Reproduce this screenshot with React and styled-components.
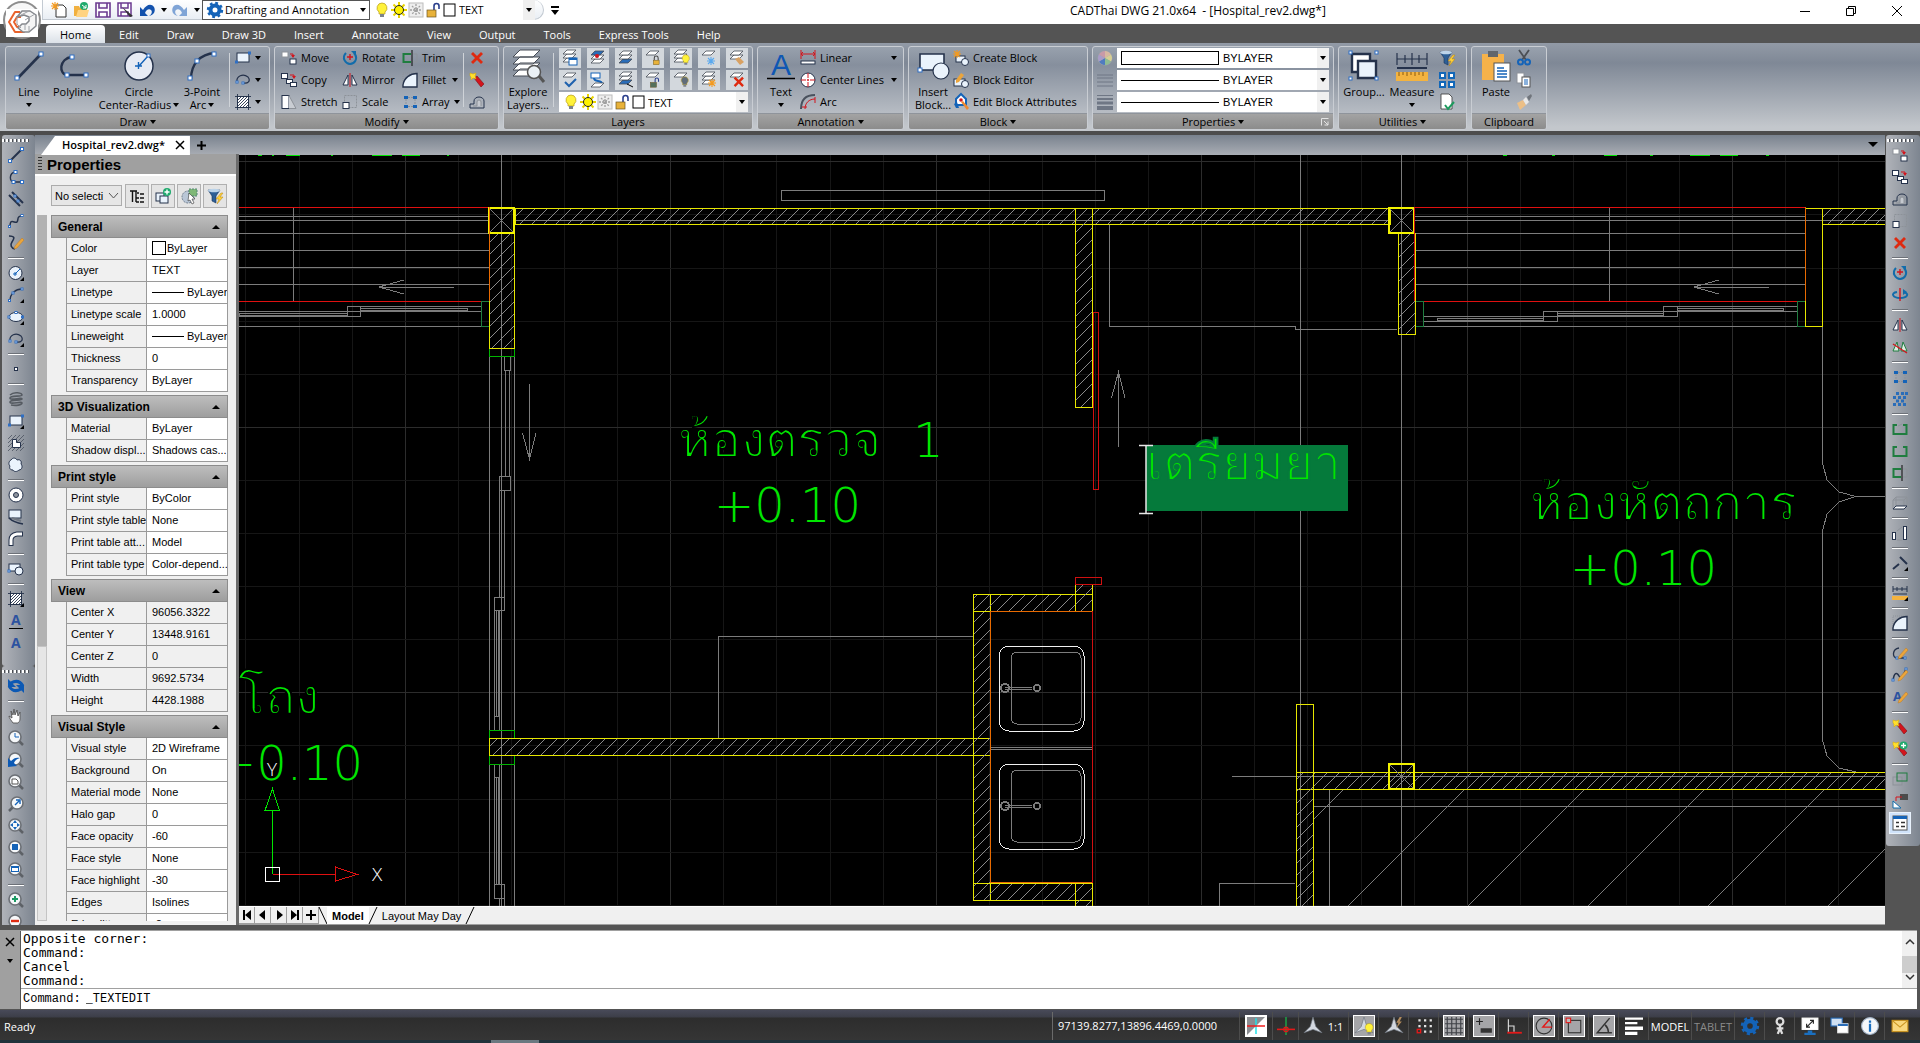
import React from 'react';
import styled, { createGlobalStyle, css } from 'styled-components'

const GlobalStyle = createGlobalStyle`
    * { box-sizing: border-box; }
    body {
        margin: 0;
        background: #545454;
        font-family: "Open Sans", "Noto Sans", sans-serif;
        font-size: 11px;
        color: #000;
    }
    button, select, input {
        font: inherit;
        color: inherit;
        margin: 0;
        padding: 0;
        border: 0;
        background: none;
    }
    select { appearance: none; }
    svg { display: block; flex: none; overflow: visible; }
`

const NAVY = '#25324b'
const BLUE = '#1463b8'
const PALE = '#eaf3fc'
const GRAY = '#8d9299'
const GREEN = '#1f7d3f'

/* ---------- icons, drawn on a 16 unit square unless a box is given ---------- */

const H = ({ x, y, s = 3 }) => <rect x={x} y={y} width={s} height={s} fill="#fff" stroke="#2f6fc4" />
const Box = ({ x, y, w, h, c = NAVY, f = '#fff' }) => <rect x={x} y={y} width={w} height={h} fill={f} stroke={c} />
const P = ({ d, c = NAVY, w = 1, f = 'none' }) => <path d={d} stroke={c} strokeWidth={w} fill={f} />
const Corner = () => <path d="M16 12v4h-4z" fill="#000" />
const Sheet = ({ y, f = '#fff' }) => <path d={`M5 ${y}h9l-4 4H1z`} fill={f} stroke="#454b55" strokeWidth="0.8" />
const Pen = () => <path d="M14 3l2 2-7 8-3 1 1-3z" fill="#eba53c" stroke="#b97518" strokeWidth="0.4" />
const Lens = ({ children }) => (
    <g>
        <path d="M11 11l4 4" stroke="#5d6166" strokeWidth="2.5" />
        <circle cx="7" cy="7" r="6" fill="#f6f8fa" stroke="#6c7076" strokeWidth="1.6" />
        {children}
    </g>
)
const Lock = ({ open, c = '#e8b23a' }) => (
    <g>
        <path d={open ? 'M9 8V4a2.500 2.500 0 0 1 5 0v3' : 'M5 8V4.500a3 3 0 0 1 6 0V8'} fill="none" stroke={open ? '#2b3f8c' : '#444'} strokeWidth="1.6" />
        <rect x={open ? 2 : 3.5} y="8" width="9" height="7" fill={c} stroke="#6b5523" strokeWidth="0.7" />
    </g>
)
const Bulb = ({ c = '#fff23a' }) => (
    <g>
        <path d="M8 1a5 5 0 0 0-3 9v2h6v-2a5 5 0 0 0-3-9z" fill={c} stroke="#b59a1c" strokeWidth="0.7" />
        <path d="M6 12h4v3H6z" fill="#7d838b" />
    </g>
)
const Spark = ({ x = 4, y = 4, c = '#f39a1f' }) => (
    <path d={`M${x - 4} ${y}h8M${x} ${y - 4}v8M${x - 3} ${y - 3}l6 6M${x + 3} ${y - 3}l-6 6`} stroke={c} strokeWidth="1.1" />
)
const Gear = ({ c = BLUE }) => (
    <g fill="none" stroke={c}>
        <circle cx="8" cy="8" r="4.500" strokeWidth="4" />
        <circle cx="8" cy="8" r="7" strokeWidth="2.400" strokeDasharray="2.750 2.750" />
    </g>
)
const Cross = () => <path d="M2 4l2-2 4 4 4-4 2 2-4 4 4 4-2 2-4-4-4 4-2-2 4-4z" fill="#de2a10" />
const Stick = () => (
    <g>
        <path d="M5 6l3-2 7 8-3 3z" fill="#d3141c" stroke="#7e1015" strokeWidth="0.6" />
        <path d="M1 1l3 1 3-1-1 3 1 3-3-1-2 2V5L1 4z" fill="#ffe02e" stroke="#d7a900" strokeWidth="0.5" />
    </g>
)
const Funnel = () => (
    <g>
        <path d="M1 2h12L9 8v7l-4-2V8z" fill="#2d5f96" stroke="#1a365c" strokeWidth="0.6" />
        <ellipse cx="7" cy="2.500" rx="6" ry="1.800" fill="#bcd4ea" />
        <path d="M14 5l-5 6h3l-2 5 6-7h-3l3-4z" fill="#ffd23a" stroke="#b98412" strokeWidth="0.5" />
    </g>
)
const Compass = () => <path d="M8 0l2.500 8.500L16 14l-8-3-8 3 5.500-5.500z" fill="#d3d8e0" stroke="#6b737e" strokeWidth="0.6" />

const icons = {
    line: <><P d="M2 14L14 2" w={2} /><H x={0.5} y={12.5} /><H x={12.5} y={0.5} /></>,
    polyline: <><P d="M7 3C1 4 1 13 6 13h8" w={1.4} /><H x={6} y={1.5} /><H x={4} y={11.5} /><H x={12.5} y={11.5} /></>,
    mline: <><P d="M1 4l11 11M4 1l11 11" w={2} /><H x={6} y={4} s={2} /><H x={9} y={9} s={2} /></>,
    spline: <><P d="M2 14C2 4 7 11 9 9S8 3 14 3" w={1.5} /><H x={0.5} y={12.5} s={2} /><H x={13} y={1.5} s={2} /></>,
    sketch: <><P d="M1 1c7 0 5 3 3 6s-1 6 3 7" w={1.6} /><Pen /></>,
    circle: <><circle cx="7.5" cy="8" r="6.500" fill={PALE} stroke={NAVY} /><P d="M7 9l5-5M5 9h4M7 7v4" c={BLUE} /><Corner /></>,
    arc: <><P d="M2 14C2 6 8 2 14 2" w={1.3} /><H x={0.5} y={12.5} s={2} /><H x={4} y={5} s={2} /><H x={13} y={1} s={2} /><Corner /></>,
    ellipse: <><ellipse cx="8" cy="8" rx="7" ry="4.500" fill={PALE} stroke={NAVY} /><H x={0} y={7} s={2} /><H x={7} y={2.5} s={2} /><H x={13.5} y={7} s={2} /><Corner /></>,
    ellarc: <><P d="M2 10C1 4 8 1 13 5c3 4 0 7-5 6" w={1.2} /><H x={1} y={9} s={2} /><H x={7} y={10} s={2} /></>,
    ellarcc: <><P d="M2 10C1 4 8 1 13 5c3 4 0 7-5 6" w={1.2} /><H x={1} y={9} s={2} /><H x={7} y={10} s={2} /><Corner /></>,
    point: <Box x={6.5} y={6.5} w={3} h={3} />,
    helix: <g fill="none" stroke="#565b62"><path d="M2 4c4-4 12-2 12 0S2 4 2 7s12-1 12 1-12 0-12 3 12-1 12 1-6 3-11 2" strokeWidth="1.600" /></g>,
    rect: <><Box x={2} y={3} w={12} h={9} f={PALE} /><H x={0.5} y={11} s={2} /><H x={13.5} y={2} s={2} /></>,
    rectc: <><Box x={2} y={3} w={12} h={9} f={PALE} /><H x={0.5} y={11} s={2} /><H x={13.5} y={2} s={2} /><Corner /></>,
    region: <><P d="M0 4l4-4M0 8l8-8M0 12L12 0M0 16L16 0M4 16L16 4M8 16l8-8M12 16l4-4" c="#4a525e" w={0.8} /><P d="M4.500 12.500v-8h4v3h4v5z" f="#fff" /></>,
    cloud: <P d="M3 3c2-3 5-2 6 0 3-1 5 1 4 4 2 2 1 6-2 6-2 2-5 2-6 0-3 0-4-2-3-4-2-2-1-5 1-6z" f={PALE} />,
    donut: <><circle cx="8" cy="8" r="7" fill="#fff" stroke={NAVY} /><circle cx="8" cy="8" r="2.500" fill="#8f959e" stroke={NAVY} /></>,
    wipe: <><Box x={1} y={1} w={12} h={8} f={PALE} /><P d="M1 9c4 4 8 5 14 6" w={1.6} /><P d="M4 9l9 3" c="#6f7782" w={2} /></>,
    thick: <><P d="M3 15V9q0-5 6-6h6" c={NAVY} w={5} /><P d="M3 14V9q0-5 6-6h5" c="#fff" w={3} /></>,
    block: <><Box x={1} y={3} w={11} h={7} f={PALE} /><circle cx="11" cy="10" r="4" fill={PALE} stroke={NAVY} /><H x={0} y={9} s={2} /></>,
    hatch: <><Box x={2.5} y={2.5} w={11} h={11} /><P d="M3 6l3-3M3 9l6-6M3 12l9-9M4 14L14 4M7 14l7-7M10 14l4-4M0 2.500h16M2.500 0v16M0 13.500h16M13.500 0v16" w={0.9} /></>,
    hatchc: <><Box x={2.5} y={2.5} w={11} h={11} /><P d="M3 6l3-3M3 9l6-6M3 12l9-9M4 14L14 4M7 14l7-7M10 14l4-4M0 2.500h16M2.500 0v16M0 13.500h16M13.500 0v16" w={0.9} /><Corner /></>,
    textu: <><text x="3" y="12" fontSize="14" fontWeight="bold" fontFamily="Open Sans" fill="#2c52a0">A</text><P d="M1 15.500h14" c="#000" /></>,
    text: <text x="3" y="13" fontSize="14" fontWeight="bold" fontFamily="Open Sans" fill="#2c52a0">A</text>,
    sync: <><P d="M15 8C12 3 8 2 3 5M1 8c3 5 7 6 12 3" c="#0c59b4" w={3} /><path d="M0 1v8h8zM16 15V7H8z" fill="#0c59b4" /></>,
    hand: <P d="M5 15C3 12 1 10 1 8l3 2-1-7 2 4 1-6 1 6 2-5 1 6 2-4 0 7c0 2-1 3-2 4z" f="#fff" c="#555" w={0.9} />,
    zoomrt: <Lens><P d="M7 3v4h4" c={BLUE} /></Lens>,
    zoomprev: <Lens><path d="M0 15V6l3 3c3-3 5-4 9-3-4 1-5 3-6 5l3 3z" fill="#0c59b4" /></Lens>,
    zoompage: <Lens><path d="M4 5h4l2 2v3H4z" fill="#fff" stroke="#555" /></Lens>,
    zoomdyn: <g transform="matrix(-1 0 0 1 16 0)"><Lens><P d="M9 9L5 5M4 8V4h4" c={BLUE} w={1.4} /></Lens></g>,
    zoomctr: <Lens><path d="M7 2l2 3H5zM7 12l2-3H5zM2 7l3-2v4zM12 7L9 5v4z" fill={BLUE} /></Lens>,
    zoomobj: <Lens><rect x="4" y="4" width="6" height="6" fill={BLUE} /></Lens>,
    zoomwin: <Lens><Box x={3.5} y={4.5} w={7} h={5} c={BLUE} /><P d="M3 5h8" c={BLUE} w={2} /></Lens>,
    zoomin: <Lens><P d="M4 7h6M7 4v6" c="#1c9a63" w={2} /></Lens>,
    zoomout: <Lens><P d="M3 7h8" c="#de2a10" w={2.4} /></Lens>,
    move: <><Box x={1} y={2} w={6} h={5} c={GRAY} /><Box x={9} y={9} w={6} h={5} /><P d="M9 4h3v3" c="#d3141c" /><path d="M10 5h4l-2 3z" fill="#d3141c" /></>,
    copy: <><Box x={0.5} y={1.5} w={6} h={5} /><Box x={5.5} y={7.5} w={6} h={4} /><Box x={9.5} y={10.5} w={6} h={4} /><P d="M9 3h4v2" c="#d3141c" /><path d="M11 4h4l-2 3z" fill="#d3141c" /></>,
    offset: <><P d="M1 14v-4h4V7a5 4 0 0 1 10 0v7H1" /><P d="M4 12h4V8a2 2 0 0 1 4 0v4" c={GRAY} f="#c5c9cf" /></>,
    scale: <><rect x="2.5" y="1.500" width="12" height="12" fill="none" stroke={GRAY} strokeDasharray="2 1" /><Box x={1} y={8.5} w={6} h={6} /></>,
    erase: <Cross />,
    rotate: <><P d="M4 3C-1 8 4 14 8 14s9-5 4-11" c="#116cab" w={2} /><path d="M9 1h5v5z" fill="#116cab" /><P d="M5 7h6M8 4v6" c="#d3141c" w={1.4} /></>,
    rotate3d: <><P d="M5 5C-2 6 1 11 8 11s10-4 4-6" c="#116cab" w={2} /><path d="M11 2l4 3-4 3z" fill="#116cab" /><P d="M8 1v13" c="#d3141c" w={1.4} /></>,
    mirror: <><P d="M6 3v10H1z" f="#fff" /><P d="M10 3v10h5z" f="#fff" /><P d="M8 1v14" c="#d3141c" /></>,
    mirror3d: <><P d="M5 3l2 9H1z" c={GREEN} f="#dfeee4" /><P d="M11 3l4 9H9z" c={GREEN} f="#dfeee4" /><P d="M1 5l14 9" c="#d3141c" w={1.3} /></>,
    array: <g><path d="M2 2h4v3H2zM11 2h4v3h-4zM2 11h4v3H2zM11 11h4v3h-4z" fill={BLUE} /><path d="M6 3.500h5M6 12.500h5M4 5v6M13 5v6" stroke={GRAY} strokeDasharray="2 1" /></g>,
    array3d: <path d="M1 5h3v3H1zM6 5h3v3H6zM11 5h3v3h-3zM1 12h3v3H1zM6 12h3v3H6zM11 12h3v3h-3zM4 1h3v3H4zM9 1h3v3H9zM13 1h3v3h-3zM4 8.500h3v3H4zM9 8.500h3v3H9z" fill="#2a6db9" />,
    brk: <><P d="M5 4H1.500v9h13V4H11" c={GREEN} w={2} /><P d="M6 5l4-2" c={GRAY} /></>,
    brk2: <P d="M5 4H1.500v9h13V4H11" c={GREEN} w={2} />,
    trim: <><P d="M9 4H1.500v8H9" c={GREEN} w={2} /><P d="M11 4h4v8h-4" c={GRAY} /><P d="M10 0v16" c="#222" w={1.2} /></>,
    cube: <><P d="M1 14V5l3-3h11v9l-3 3zM1 5h11v9M12 5l3-3M4 2v9l-3 3" c={GRAY} /><P d="M1 14l3-3h11l-3 3z" f="#fff" /></>,
    align: <><Box x={0.5} y={7.5} w={3} h={7} /><Box x={11.5} y={1.5} w={3} h={13} /><P d="M5 6l5-4M5 15h5" c={GRAY} /></>,
    chamf: <><P d="M1 14l6-5M8 2l7 7" c={NAVY} w={2} /><Corner /></>,
    measure: <><P d="M1 4h14M1 1v6M5 2v4M10 2v4M15 1v6M1 9h14" /><path d="M0 11h16v4H0z" fill="#f4b33f" /><Corner /></>,
    fillet: <><rect x="1" y="1" width="13" height="13" fill="none" stroke={GRAY} strokeDasharray="1 1" /><P d="M1 15V13C2 6 8 1.500 15 1.500V15z" w={1.4} f={PALE} /></>,
    pedit: <><P d="M7 3C0 4 0 13 5 13h8" w={1.3} /><H x={4} y={12} s={2} /><H x={12} y={12} s={2} /><Pen /></>,
    splinedit: <><P d="M1 14C2 5 5 5 7 9s5-2 7-7" w={1.5} /><H x={0} y={12} s={2} /><H x={13} y={1} s={2} /><Pen /></>,
    textedit: <><text x="1" y="12" fontSize="13" fontWeight="bold" fontFamily="Open Sans" fill="#2c52a0">A</text><Pen /></>,
    explode: <Stick />,
    explodeadd: <><Stick /><circle cx="11.5" cy="4.500" r="4" fill="#1faa6d" /><P d="M9 4.500h5M11.500 2v5" c="#fff" w={1.3} /></>,
    order: <><Box x={1} y={6} w={9} h={8} c={GRAY} f="none" /><Box x={5} y={2} w={10} h={8} c={GREEN} f="none" /></>,
    clip: <><path d="M8 1h8v6H8z" fill="#4b4b4b" /><path d="M1 8l8 7H1z" fill="#fff" stroke="#116cab" /><P d="M4 8V4h6" c="#d3141c" /></>,
    props: <><Box x={1} y={1} w={14} h={14} c="#555" /><path d="M1 1h14v3H1z" fill={BLUE} /><P d="M4 7.500h3M9 7.500h4M4 11.500h3M9 11.500h4" c="#333" w={1.5} /></>,
    stretch: <><Box x={1} y={1.5} w={7} h={13} f="#fff" /><P d="M8 1.500l7 13H8" c={GRAY} f="#c9cdd3" /></>,
    gearico: <Gear />,
    newdoc: <><path d="M5 3h7l3 3v9H5z" fill="#fff" stroke="#333" /><Spark /></>,
    open: <><path d="M1 4h5l1 2h7v8H1z" fill="#f1b03f" /><path d="M3 15l2-7h11l-2 7z" fill="#ffd382" /><circle cx="11" cy="4" r="4" fill="#1faa6d" /><P d="M9 3l4 3M13 3v3h-3" c="#fff" /></>,
    save: <path d="M1 1h14v14H1zM4 1v5h8V1M4 15v-5h8v5" fill="#fff" stroke="#6b3a90" strokeWidth="1.600" />,
    saveas: <><path d="M1 1h13v13H1zM4 1v5h7V1M4 14v-4h7v4" fill="#fff" stroke="#6b3a90" strokeWidth="1.500" /><path d="M5 5l11 9-3 1z" fill="#333" /></>,
    undo: <path d="M1 5v9h8L6 11c1-3 4-5 6-3s0 5-2 6c5-1 7-5 5-9C12 1 7 3 4 8z" fill="#1352ad" />,
    redo: <path d="M15 5v9H7l3-3c-1-3-4-5-6-3s0 5 2 6C1 13-1 9 1 5c3-4 8-2 11 3z" fill="#7fa4d6" />,
    bulb: <Bulb />,
    sun: <g><path d="M8 0v16M0 8h16M2.500 2.500l11 11M13.500 2.500l-11 11" stroke="#e8d400" strokeWidth="2" /><circle cx="8" cy="8" r="4.500" fill="#fff200" stroke="#222" /></g>,
    vpsun: <g stroke="#a0a0a0"><rect x="1" y="1" width="14" height="14" fill="#eee" stroke="#bcbcbc" /><path d="M8 2v12M2 8h12M4 4l8 8M12 4l-8 8" strokeWidth="1.300" strokeDasharray="2 1" /></g>,
    unlock: <Lock open />,
    swatch: <Box x={2} y={2} w={11} h={12} c="#000" />,
    lstate: <><Sheet y={8} /><Sheet y={4} /><Sheet y={0} /><Box x={7} y={8} w={8} h={7} c={BLUE} /><P d="M7 9h8" c={BLUE} w={2} /></>,
    lcur: <><Sheet y={9} /><Sheet y={5} /><Sheet y={1} f="#2a6db9" /><circle cx="7" cy="6" r="2" fill="#d3141c" /></>,
    lprev: <><Sheet y={9} f="#2a6db9" /><Sheet y={5} /><Sheet y={1} /></>,
    llock: <><Sheet y={1} /><g transform="translate(6 5) scale(.65)"><Lock /></g></>,
    lbulb: <><Sheet y={8} /><Sheet y={4} /><Sheet y={0} /><g transform="translate(7 4) scale(.72)"><Bulb /></g></>,
    lfreeze: <><Sheet y={1} /><Spark x={10} y={11} c="#5aa9ef" /></>,
    lmatch: <><Sheet y={5} /><Sheet y={1} /><path d="M6 9l4-2 5 5-4 3z" fill="#d8a163" /></>,
    lcheck: <><Sheet y={1} /><P d="M3 10l4 4 7-7" c="#1f62ae" w={2} /></>,
    lcopy: <><Box x={1} y={1} w={9} h={5} c={BLUE} /><P d="M4 6c0 5 8 1 8 6" c={BLUE} w={2} /><Sheet y={11} /></>,
    lwalk: <><Sheet y={8} f="#2a6db9" /><Sheet y={4} /><Sheet y={0} /><P d="M9 12l6 3" c="#000" /></>,
    lunlock: <><Sheet y={1} /><g transform="translate(4 5) scale(.68)"><Lock open c="#55705c" /></g></>,
    loff: <><Sheet y={1} /><g transform="translate(6 4) scale(.72)"><Bulb c="#5f6c7a" /></g></>,
    lnew: <><Sheet y={8} /><Sheet y={4} /><Sheet y={0} /><Spark x={11} y={11} /></>,
    ldel: <><Sheet y={1} /><g transform="translate(3 3) scale(.85)"><Cross /></g></>,
    linear: <><P d="M1 0v9M15 0v9M1 4h14M3 2L1 4l2 2M13 2l2 2-2 2" c="#d3141c" /><Box x={1} y={11} w={14} h={3} /></>,
    center: <><circle cx="8" cy="8" r="7" fill="#fff" stroke={NAVY} /><P d="M1 8h5M7 8h2M10 8h5M8 1v5M8 7v2M8 10v5" c="#d3141c" /></>,
    dimarc: <><P d="M1 15C1 6 6 1 15 1" c="#4a525e" w={2} /><P d="M5 15C5 9 9 5 15 5M15 3v6M2 13h5" c="#d3141c" /></>,
    mkblock: <><Box x={3} y={6} w={9} h={6} f={PALE} /><circle cx="12" cy="12" r="3.500" fill={PALE} stroke={NAVY} /><Spark /></>,
    edblock: <><Box x={1} y={7} w={11} h={7} f={PALE} /><circle cx="12" cy="12" r="3.500" fill={PALE} stroke={NAVY} /><path d="M8 1l3 2-5 7-3 1v-3z" fill="#eba53c" /></>,
    edattr: <><path d="M8 0l5 5v6H3V5z" fill="#fff" stroke={BLUE} strokeWidth="2" /><circle cx="8" cy="6" r="1.800" fill="#d3141c" /><path d="M1 10l3-2 2 6H3z" fill={BLUE} /><path d="M8 8l2-1 6 7-2 2z" fill="#f08a32" /></>,
    wheel: <g><circle cx="8" cy="8" r="7.500" fill="#9aa1ab" /><path d="M8 8V1a7 7 0 0 1 6 3.500z" fill="#d8b8a0" /><path d="M8 8l6-3.500a7 7 0 0 1 0 7z" fill="#d6cf94" /><path d="M8 8l6 3.500A7 7 0 0 1 8 15z" fill="#8fbc92" /><path d="M8 8v7a7 7 0 0 1-6-3.500z" fill="#4f7cc0" /><path d="M8 8l-6 3.500a7 7 0 0 1 0-7z" fill="#a99cc8" /><path d="M8 8L2 4.500A7 7 0 0 1 8 1z" fill="#c99aa8" /></g>,
    ltype: <P d="M0 3h16M0 6h16M0 10h16M0 14h16" c="#6f7785" w={1} />,
    lweight: <><P d="M0 1.500h16" c="#6f7785" /><P d="M0 5h16" c="#6f7785" w={2} /><P d="M0 9h16" c="#6f7785" w={3} /><P d="M0 14h16" c="#6f7785" w={4} /></>,
    filter: <Funnel />,
    quad: <path d="M1 1h5v5H1zM10 1h5v5h-5zM1 10h5v5H1zM10 10h5v5h-5z" fill="#fff" stroke="#1267b8" strokeWidth="2" />,
    audit: <><path d="M2 0h8l3 3v12H2z" fill="#fff" stroke="#333" strokeWidth="0.8" /><P d="M6 11l3 4 6-7" c="#1b9a5c" w={2} /></>,
    cut: <><P d="M3 0l7 10M13 0L6 10" c="#4b4f55" w={1.8} /><circle cx="4.5" cy="12" r="2.500" fill="none" stroke="#1463b8" strokeWidth="2" /><circle cx="11.5" cy="12" r="2.500" fill="none" stroke="#1463b8" strokeWidth="2" /></>,
    copyclip: <><Box x={1} y={1} w={7} h={10} c={GRAY} /><Box x={6} y={5} w={8} h={10} c="#555" /><P d="M8 8h4M8 10h4M8 12h4" c={BLUE} /></>,
    brush: <><path d="M1 9l6-3 3 5-6 5z" fill="#ecbf86" /><path d="M7 6l3-3 3 5-3 3z" fill="#e8e8e8" /><path d="M11 3l4-3 1 2-3 5z" fill="#70757c" /></>,
    tree: <P d="M1 3h7M3.500 3v11M7 3v11M8 5h2M11 6h4M7 10h3M11 10h4M7 14h3M11 14h4" c="#111" w={1.4} />,
    addsel: <><Box x={1} y={5} w={8} h={8} f={PALE} /><Box x={5} y={8} w={8} h={7} f={PALE} /><circle cx="12" cy="4" r="4" fill="#1faa6d" /><P d="M9.500 4h5M12 1.500v5" c="#fff" w={1.4} /></>,
    qsel: <><circle cx="7" cy="9" r="6" fill="#b9c6d6" stroke="#6c7b8c" strokeDasharray="2 1" /><path d="M8 1h8v7H8z" fill="#7fb877" stroke="#587" strokeDasharray="2 1" /><path d="M8 5l6 6h-3l2 4-2 1-2-4-2 1z" fill="#fff" stroke="#333" strokeWidth="0.6" /></>,
    /* status bar */
    snaptrack: <><path d="M0 0h16L0 16z" fill="#8b8d92" /><P d="M8 1v14" c="#1fe3ea" w={1.3} /><P d="M0 8h16" c="#f01818" w={1.3} /></>,
    cross: <><P d="M8 0v16" c="#19b04a" w={1.2} /><P d="M0 11h16" c="#e31919" w={1.4} /><circle cx="8" cy="11" r="2" fill="none" stroke="#e31919" /></>,
    compass: <Compass />,
    compassb: <><Compass /><g transform="translate(7 5) scale(.7)"><Bulb /></g></>,
    compassl: <><Compass /><path d="M13 0l-3 5h2l-2 5 5-6h-2l2-4z" fill="#b08a5c" /></>,
    dots: <><path d="M3 2h2v2H3zM8 2h2v2H8zM13 2h2v2h-2zM3 7h2v2H3zM8 7h2v2H8zM13 7h2v2h-2zM8 12h2v2H8zM13 12h2v2h-2z" fill="#e4e4e4" /><rect x="2" y="11" width="3" height="3" fill="none" stroke="#e31919" strokeWidth="1.200" /></>,
    grid: <P d="M2 0v16M6 0v16M10 0v16M14 0v16M0 2h16M0 6h16M0 10h16M0 14h16" c="#3e4046" />,
    dyn: <><P d="M1 4h6M4 1v6" c="#222" /><path d="M5 10h10v4H5z" fill="#333" /></>,
    ortho: <><P d="M3 2v11M3 8h5v5" c="#ddd" /><P d="M2 14h13" c="#e31919" w={1.6} /></>,
    polar: <><circle cx="8" cy="8" r="7" fill="none" stroke="#333" /><P d="M13 2L7 9h8" c="#e31919" w={1.3} /></>,
    osnap: <><Box x={3} y={3} w={11} h={11} c="#333" f="none" /><Box x={1} y={1} w={4} h={4} c="#e31919" f="#bbb" /></>,
    otrack: <P d="M13 1L2 14h13M9 7q3 3 3 7" c="#333" w={1.3} />,
    lwt: <><P d="M0 1.500h16M0 5.500h11" c="#fff" w={2} /><P d="M0 10h16M0 14.500h11" c="#fff" w={3} /></>,
    badge: <g fill="none" stroke="#dedede" strokeWidth="2"><circle cx="8" cy="4" r="3" /><path d="M8 7v3M5 10h6M6 15l2-5 2 5" /></g>,
    screen: <><Box x={1} y={1} w={14} h={10} c="#fff" /><P d="M5 9l6-6M8 3h3v3M5 6v3h3" c="#222" /><path d="M6 12h4v2h3v2H3v-2h3z" fill="#1a6fc0" /></>,
    windows: <><Box x={0} y={1} w={10} h={7} c="#2a6db9" f="#cfe0f3" /><Box x={6} y={6} w={9} h={8} c="#eee" /><P d="M6 7h9" c="#2a6db9" w={2} /></>,
    info: <><circle cx="8" cy="8" r="7.500" fill="#f4f7fb" stroke="#9fb0c4" /><path d="M7 6h2v7H7zM7 3h2v2H7z" fill="#1a6fc0" /></>,
    mail: <><Box x={1} y={3} w={14} h={10} c="#c8921f" f="#f9d77c" /><P d="M1 3l7 6 7-6" c="#c8921f" /></>,
}

/* large ribbon icons, on a 32 unit square */
const bigIcons = {
    Line: <><P d="M4 29L28 4" w={2.6} /><H x={2} y={26} s={4} /><H x={26} y={2} s={4} /></>,
    Polyline: <><P d="M15 7C2 8 1 25 11 25h19" w={2.4} /><H x={13} y={5} s={4} /><H x={8} y={23} s={4} /><H x={27} y={23} s={4} /></>,
    Circle: <><circle cx="16" cy="16" r="14" fill="#e6eaf3" stroke={NAVY} strokeWidth="1.500" /><P d="M16 16l9-10M12 16h7M15.500 12v7" c={BLUE} w={1.4} /><H x={24} y={4} s={3} /></>,
    Arc: <><P d="M5 29C5 14 14 4 29 3" w={2.4} /><H x={2} y={26} s={4} /><H x={9} y={9} s={4} /><H x={26} y={2} s={4} /></>,
    Layers: (
        <g fill="#fff" stroke="#454b55">
            <path d="M8 19h20l-7 7H1zM8 13h20l-7 7H1zM8 7h20l-7 7H1zM8 0h20l-7 7H1z" />
            <path d="M27 26l5 6" stroke="#555" strokeWidth="3" /><circle cx="22" cy="22" r="6.500" fill="#eaf0f5" stroke="#555" strokeWidth="1.500" />
        </g>
    ),
    Text: <><text x="6" y="25" fontSize="30" fontFamily="Liberation Sans" fill="#0f57b3">A</text><P d="M2 28.500h28" c="#000" w={1.4} /></>,
    Insert: <><P d="M3 4h24v16H3z" w={1.6} f={PALE} /><circle cx="24" cy="21" r="8" fill={PALE} stroke={NAVY} strokeWidth="1.200" /><H x={1} y={18} s={4} /></>,
    Group: <><P d="M4 4h18v18H4z" w={2.4} f="#fff" /><P d="M10 11h18v17H10z" w={2.4} f={PALE} /><H x={1} y={1} /><H x={27} y={1} /><H x={1} y={27} /><H x={27} y={27} /></>,
    Measure: <><P d="M1 9h30M1 3v12M9 5v8M16 3v12M23 5v8M31 3v12" w={1.2} /><P d="M1 18h30" w={2} /><path d="M0 22h32v9H0z" fill="#f4b33f" /><P d="M3 22v4M7 22v3M11 22v4M15 22v3M19 22v4M23 22v3M27 22v4" c="#8b5a10" /></>,
    Paste: <><path d="M2 4h22v26H2z" fill="#f6b24a" /><path d="M8 1h10v6H8z" fill="#61666c" /><Box x={14} y={13} w={16} h={18} c="#555" /><P d="M17 18h7M17 21h10M17 24h10M17 27h10" c={BLUE} w={1.5} /></>,
}

const Icon = ({ name, size = 16 }) => <svg width={size} height={size} viewBox="0 0 16 16" aria-hidden="true">{icons[name]}</svg>
const BigIcon = ({ name }) => <svg width="32" height="32" viewBox="0 0 32 32" aria-hidden="true">{bigIcons[name]}</svg>

const Caret = styled.span`
    display: inline-block;
    border: 3px solid transparent;
    border-top: 4px solid #000;
    border-bottom: 0;
    flex: none;
`

/* ---------- title bar ---------- */

const Page = styled.div`
    display: flex;
    flex-direction: column;
    height: 100vh;
    min-width: 1600px;
    overflow: hidden;
`
const TitleBar = styled.header`
    position: relative;
    display: flex;
    height: 24px;
    flex: none;
    background: #fff;
    padding-left: 42px;
`
const Logo = styled.div`
    position: absolute;
    left: 3px;
    top: 2px;
    z-index: 2;
`
const QuickBar = styled.div`
    display: flex;
    align-items: center;
    height: 20px;
    padding: 0 8px 0 5px;
    border: 1px solid #c3cad2;
    border-top: 0;
    border-radius: 0 10px 10px 0;
    background: linear-gradient(#fff, #e9eef4);
`
const QuickButton = styled.button`
    display: flex;
    justify-content: center;
    align-items: center;
    width: ${p => p.$narrow ? '11px' : '22px'};
    height: 20px;
`
const Combo = styled.div`
    display: flex;
    align-items: center;
    gap: ${p => p.$gap || 2}px;
    width: ${p => p.$width};
    height: 20px;
    padding-left: 4px;
    background: #fff;
    border: ${p => p.$framed ? '1px solid #555' : '0'};
    select { flex: 1; min-width: 0; height: 18px; font-family: ${p => p.$arial ? '"Liberation Sans", sans-serif' : 'inherit'}; }
`
const ComboArrow = styled.span`
    display: flex;
    align-items: center;
    justify-content: center;
    align-self: stretch;
    width: 12px;
    background: ${p => p.$shaded ? '#f0f0f0' : 'none'};
`
const AppTitle = styled.h1`
    flex: 1;
    margin: 0;
    font-size: 12px;
    font-weight: normal;
    line-height: 22px;
    padding-left: 504px;
`
const WindowButton = styled.button`
    display: flex;
    align-items: center;
    justify-content: center;
    width: 46px;
    height: 22px;
`

const LayerCombo = ({ width, label }) => (
    <Combo $width={width} $gap={1}>
        <Icon name="bulb" /><Icon name="sun" /><Icon name="vpsun" /><Icon name="unlock" /><Icon name="swatch" />
        <select aria-label={label}><option>TEXT</option></select>
        <ComboArrow $shaded><Caret /></ComboArrow>
    </Combo>
)

const Title = () => (
    <TitleBar>
        <Logo>
            <svg width="38" height="38" viewBox="0 0 38 38" role="img" aria-label="CADThai">
                <circle cx="19" cy="18" r="18" fill="#f7f7f7" stroke="#8e8e8e" strokeWidth="2" />
                <path d="M3 7h32v28H3z" fill="#fff" />
                <g fill="none" strokeLinejoin="round">
                    <path d="M17 10H12L6 20l6 10h9l3-5M18 15h-4l-3 5 3 5h3" stroke="#e8622c" strokeWidth="2" />
                    <path d="M14 15l5-6h8l6 4v11l-7 6h-6l-5-4 4-4h4l3-3v-4l-5-2z" fill="#f5f5f5" stroke="#85888d" strokeWidth="1.500" />
                    <path d="M18 13l8-4M22 18l10-6M22 22v6M26 24v5M14 15v7l4 4" stroke="#a0a3a8" />
                </g>
            </svg>
        </Logo>
        <QuickBar>
            <QuickButton aria-label="New"><Icon name="newdoc" /></QuickButton>
            <QuickButton aria-label="Open"><Icon name="open" /></QuickButton>
            <QuickButton aria-label="Save"><Icon name="save" /></QuickButton>
            <QuickButton aria-label="Save as"><Icon name="saveas" /></QuickButton>
            <QuickButton aria-label="Undo"><Icon name="undo" /></QuickButton>
            <QuickButton $narrow aria-label="Undo list"><Caret /></QuickButton>
            <QuickButton aria-label="Redo"><Icon name="redo" /></QuickButton>
            <QuickButton $narrow aria-label="Redo list"><Caret /></QuickButton>
            <Combo $width="168px" $framed>
                <Icon name="gearico" />
                <select aria-label="Workspace"><option>Drafting and Annotation</option></select>
                <ComboArrow><Caret /></ComboArrow>
            </Combo>
            <LayerCombo width="165px" label="Layer" />
        </QuickBar>
        <QuickButton aria-label="Customize"><svg width="8" height="9"><path d="M0 0h8v2H0zM0 4h8L4 9z" /></svg></QuickButton>
        <AppTitle>CADThai DWG 21.0x64 &nbsp;- [Hospital_rev2.dwg*]</AppTitle>
        <WindowButton aria-label="Minimize"><svg width="10" height="10"><path d="M0 5.500h10" stroke="#000" /></svg></WindowButton>
        <WindowButton aria-label="Restore"><svg width="10" height="10"><path d="M.5 2.500h7v7h-7zM2.500 2.500v-2h7v7h-2" fill="none" stroke="#000" /></svg></WindowButton>
        <WindowButton aria-label="Close"><svg width="10" height="10"><path d="M0 0l10 10M10 0L0 10" stroke="#000" /></svg></WindowButton>
    </TitleBar>
)

/* ---------- ribbon ---------- */

const TabRow = styled.nav`
    display: flex;
    height: 19px;
    flex: none;
    padding-left: 46px;
    background: #545454;
`
const RibbonTab = styled.button`
    height: 18px;
    margin-top: 1px;
    padding: 1px 14px 0;
    color: #fff;
    line-height: 18px;
    ${p => p.$active && css`
        color: #000;
        background: linear-gradient(#fff, #dbe1e8);
        border-radius: 4px 4px 0 0;
    `}
`
const RibbonBar = styled.div`
    display: flex;
    gap: 4px;
    flex: none;
    height: 92px;
    padding: 3px 5px 4px;
    background: linear-gradient(#929aa6, #7f8896 20px, #c3c7cc 84px);
    border-bottom: 4px solid #4d4d4d;
`
const Panel = styled.section`
    display: flex;
    flex-direction: column;
    flex: 0 0 ${p => p.$width}px;
    height: 84px;
    border: 1px solid #c9cdd3;
    border-radius: 3px;
    background: linear-gradient(#98a1ad, #868f9d 18px, #b9bec5 68px);
    overflow: hidden;
`
const PanelBody = styled.div`
    display: flex;
    flex: 1;
    padding: 0 ${p => p.$pad || 4}px;
`
const PanelTitle = styled.h2`
    display: flex;
    align-items: center;
    justify-content: center;
    gap: 3px;
    margin: 0;
    height: 16px;
    font-size: 11px;
    font-weight: normal;
    background: linear-gradient(#a3a3a3, #8c8c8c);
    border-top: 1px solid #8f949b;
`
const Launcher = styled.button`
    position: absolute;
    right: 4px;
    bottom: 3px;
`
const Big = styled.button`
    display: flex;
    flex-direction: column;
    align-items: center;
    width: ${p => p.$width}px;
    padding-top: 3px;
    line-height: 13px;
    white-space: nowrap;
    flex: none;
    svg { margin-bottom: 3px; }
`
const BigLine = styled.span`
    display: flex;
    align-items: center;
    gap: 2px;
    height: 13px;
`
const Column = styled.div`
    display: flex;
    flex-direction: column;
    flex: ${p => p.$grow ? '1' : 'none'};
    width: ${p => p.$width ? p.$width + 'px' : 'auto'};
`
const Small = styled.button`
    display: flex;
    align-items: center;
    gap: 4px;
    height: 22px;
    line-height: 20px;
    padding-bottom: 1px;
    white-space: nowrap;
    text-align: left;
    span:last-child { margin-left: ${p => p.$push ? 'auto' : '0'}; }
`
const Rule = styled.i`
    width: 1px;
    flex: none;
    margin: 6px 5px;
    background: #cfd3d8;
`
const LayerGrid = styled.div`
    display: grid;
    grid-template-columns: repeat(7, 22px);
    justify-content: space-between;
    row-gap: 2px;
    padding: 1px 0 2px;
`
const LayerButton = styled.button`
    display: flex;
    align-items: center;
    justify-content: center;
    height: 20px;
    background: #d3d8dd;
`
const PropRow = styled.label`
    display: flex;
    align-items: center;
    gap: 4px;
    height: 22px;
    & > div { flex: 1; }
`

const Launch = ({ icon, lines, width, arrow }) => (
    <Big $width={width}>
        <BigIcon name={icon} />
        {lines.map((t, i) => <BigLine key={t}>{t}{arrow && i === lines.length - 1 && <Caret />}</BigLine>)}
    </Big>
)

const Tool = ({ icon, text, arrow, push }) => (
    <Small $push={push} aria-label={text ? undefined : icon}>
        <Icon name={icon} />{text}{arrow && <Caret />}
    </Small>
)

const ribbonTabs = ['Home', 'Edit', 'Draw', 'Draw 3D', 'Insert', 'Annotate', 'View', 'Output', 'Tools', 'Express Tools', 'Help']
const layerTools = ['lstate', 'lcur', 'lprev', 'llock', 'lbulb', 'lfreeze', 'lmatch', 'lcheck', 'lcopy', 'lwalk', 'lunlock', 'loff', 'lnew', 'ldel']

const Ribbon = () => (
    <>
        <TabRow>
            {ribbonTabs.map(t => <RibbonTab key={t} $active={t === 'Home'}>{t}</RibbonTab>)}
        </TabRow>
        <RibbonBar>
            <Panel $width={265}>
                <PanelBody>
                    <Launch icon="Line" lines={['Line', ' ']} arrow width={38} />
                    <Launch icon="Polyline" lines={['Polyline']} width={50} />
                    <Launch icon="Circle" lines={['Circle', 'Center-Radius']} arrow width={82} />
                    <Launch icon="Arc" lines={['3-Point', 'Arc']} arrow width={44} />
                    <Rule />
                    <Column>
                        <Tool icon="rect" arrow /><Tool icon="ellarc" arrow /><Tool icon="hatch" arrow />
                    </Column>
                </PanelBody>
                <PanelTitle>Draw <Caret /></PanelTitle>
            </Panel>
            <Panel $width={225}>
                <PanelBody $pad={6}>
                    <Column $width={61}>
                        <Tool icon="move" text="Move" /><Tool icon="copy" text="Copy" /><Tool icon="stretch" text="Stretch" />
                    </Column>
                    <Column $width={60}>
                        <Tool icon="rotate" text="Rotate" /><Tool icon="mirror" text="Mirror" /><Tool icon="scale" text="Scale" />
                    </Column>
                    <Column $width={56}>
                        <Tool icon="trim" text="Trim" /><Tool icon="fillet" text="Fillet" arrow push /><Tool icon="array" text="Array" arrow push />
                    </Column>
                    <Rule />
                    <Column>
                        <Tool icon="erase" /><Tool icon="explode" /><Tool icon="offset" />
                    </Column>
                </PanelBody>
                <PanelTitle>Modify <Caret /></PanelTitle>
            </Panel>
            <Panel $width={250}>
                <PanelBody>
                    <Launch icon="Layers" lines={['Explore', 'Layers...']} width={40} />
                    <Rule />
                    <Column $grow>
                        <LayerGrid>
                            {layerTools.map(t => <LayerButton key={t} aria-label={t}><Icon name={t} /></LayerButton>)}
                        </LayerGrid>
                        <LayerCombo width="100%" label="Current layer" />
                    </Column>
                </PanelBody>
                <PanelTitle>Layers</PanelTitle>
            </Panel>
            <Panel $width={147}>
                <PanelBody>
                    <Launch icon="Text" lines={['Text', ' ']} arrow width={38} />
                    <Column $width={97}>
                        <Tool icon="linear" text="Linear" arrow push />
                        <Tool icon="center" text="Center Lines" arrow push />
                        <Tool icon="dimarc" text="Arc" />
                    </Column>
                </PanelBody>
                <PanelTitle>Annotation <Caret /></PanelTitle>
            </Panel>
            <Panel $width={180}>
                <PanelBody>
                    <Launch icon="Insert" lines={['Insert', 'Block...']} width={40} />
                    <Column $grow>
                        <Tool icon="mkblock" text="Create Block" />
                        <Tool icon="edblock" text="Block Editor" />
                        <Tool icon="edattr" text="Edit Block Attributes" />
                    </Column>
                </PanelBody>
                <PanelTitle>Block <Caret /></PanelTitle>
            </Panel>
            <Panel $width={242} style={{ position: 'relative' }}>
                <PanelBody>
                    <Column $grow>
                        {[['wheel', 'Color'], ['ltype', 'Linetype'], ['lweight', 'Lineweight']].map(([icon, label]) => (
                            <PropRow key={icon}>
                                <Icon name={icon} />
                                <Combo $arial $gap={4}>
                                    <svg width="98" height="14">
                                        {icon === 'wheel' ? <Box x={0.5} y={0.5} w={97} h={13} c="#000" /> : <P d="M0 7.500h98" c="#000" />}
                                    </svg>
                                    <select aria-label={label}><option>BYLAYER</option></select>
                                    <ComboArrow $shaded><Caret /></ComboArrow>
                                </Combo>
                            </PropRow>
                        ))}
                    </Column>
                </PanelBody>
                <PanelTitle>Properties <Caret /></PanelTitle>
                <Launcher aria-label="Open properties"><svg width="8" height="8"><path d="M.5 7.500v-7h7M3 3l4 4M7 3.500V7H3.500" fill="none" stroke="#e4e4e4" /></svg></Launcher>
            </Panel>
            <Panel $width={129}>
                <PanelBody>
                    <Launch icon="Group" lines={['Group...']} width={42} />
                    <Launch icon="Measure" lines={['Measure', ' ']} arrow width={54} />
                    <Column><Tool icon="filter" /><Tool icon="quad" /><Tool icon="audit" /></Column>
                </PanelBody>
                <PanelTitle>Utilities <Caret /></PanelTitle>
            </Panel>
            <Panel $width={76}>
                <PanelBody>
                    <Launch icon="Paste" lines={['Paste']} width={40} />
                    <Column><Tool icon="cut" /><Tool icon="copyclip" /><Tool icon="brush" /></Column>
                </PanelBody>
                <PanelTitle>Clipboard</PanelTitle>
            </Panel>
        </RibbonBar>
    </>
)

/* ---------- side toolbars ---------- */

const Work = styled.main`
    display: flex;
    flex: 1;
    min-height: 0;
    background: #545454;
    padding-left: 2px;
`
const SideColumn = styled.div`
    display: flex;
    flex-direction: column;
    width: ${p => p.$right ? 34 : 33}px;
    flex: none;
    overflow: hidden;
`
const SideBar = styled.div`
    display: flex;
    flex-direction: column;
    align-items: center;
    flex: ${p => p.$fill ? '1 0 auto' : 'none'};
    padding: ${p => p.$tail ? '0 6px 12px 0' : '0 6px 0 0'};
    border-radius: 3px;
    background: linear-gradient(90deg, #b0b3b9, #7d8590);
`
const Grip = styled.i`
    width: 27px;
    height: 3px;
    margin: 4px 0 2px;
    background: repeating-linear-gradient(90deg, #fff 0 2px, #4a4d52 2px 3px, transparent 3px 4px);
`
const SideButton = styled.button`
    display: flex;
    align-items: center;
    justify-content: center;
    width: 22px;
    height: 22px;
    flex: none;
    ${p => p.$on && css`background: #cfe2fa; border: 1px solid #e9f2fc;`}
`
const SideRule = styled.i`
    width: 16px;
    height: 2px;
    margin: 3px 0;
    border-top: 1px solid #6d7178;
    background: #fff;
`

const drawTools = 'line polyline mline spline sketch - circle arc ellipse ellarcc - point - helix rectc region cloud - donut wipe thick - block - hatchc textu text'
const viewTools = 'sync - hand zoomrt zoomprev zoompage zoomdyn zoomctr zoomobj zoomwin - zoomin zoomout'
const modifyTools = 'move copy offset scale erase - rotate rotate3d - mirror mirror3d - array array3d - brk brk2 trim - cube - align - chamf - measure - fillet - pedit splinedit textedit - explode explodeadd - order clip props'

const Tools = ({ list, fill, tail }) => (
    <SideBar $fill={fill} $tail={tail}>
        <Grip />
        {list.split(' ').map((t, i) => t === '-'
            ? <SideRule key={i} />
            : <SideButton key={i} aria-label={t} $on={t === 'props'}><Icon name={t} /></SideButton>)}
    </SideBar>
)

/* ---------- properties palette ---------- */

const Palette = styled.aside`
    display: flex;
    flex-direction: column;
    width: 204px;
    flex: none;
    margin-top: -1px;
    border-right: 3px solid #6b6b6b;
    background: #f0f0f0;
    font-family: "Liberation Sans", Arial, sans-serif;
`
const PaletteTitle = styled.h2`
    display: flex;
    align-items: center;
    gap: 5px;
    flex: none;
    margin: 0;
    height: 22px;
    padding-left: 3px;
    font-size: 15px;
    background: #a0a0a0;
    border-bottom: 2px solid #fff;
    i { width: 4px; height: 14px; background: repeating-linear-gradient(#333 0 1px, transparent 1px 3px); }
`
const PaletteBar = styled.div`
    display: flex;
    align-items: center;
    gap: 2px;
    height: 39px;
    flex: none;
    padding: 0 0 0 16px;
    button {
        display: flex;
        align-items: center;
        justify-content: center;
        width: 24px;
        height: 24px;
        border: 1px solid #b0b0b0;
        background: #e4e4e4;
    }
`
const Selection = styled.div`
    display: flex;
    align-items: center;
    width: 71px;
    height: 21px;
    margin-right: 1px;
    padding: 0 3px;
    border: 1px solid #acacac;
    background: #e6e6e6;
    select { flex: 1; min-width: 0; }
`
const PaletteBody = styled.div`
    display: flex;
    flex: 1;
    min-height: 0;
    margin-bottom: 4px;
`
const ScrollTrack = styled.div`
    display: flex;
    flex-direction: column;
    justify-content: flex-end;
    width: 10px;
    margin: 0 4px 0 2px;
    flex: none;
    background: #b2b2b2;
    i { height: 39%; background: #e6e6e6; border: 1px solid #c4c4c4; }
`
const Sections = styled.div`
    flex: 1;
    overflow: hidden;
    padding-right: 5px;
`
const SectionHead = styled.button`
    display: flex;
    align-items: center;
    justify-content: space-between;
    width: 177px;
    height: 23px;
    padding: 0 7px 0 6px;
    font-size: 12px;
    font-weight: bold;
    border: 1px solid #8c8c8c;
    background: linear-gradient(#bdbdbd, #9e9e9e);
    &::after { content: ''; border: 4px solid transparent; border-top: 0; border-bottom: 4px solid #000; }
`
const PropTable = styled.table`
    table-layout: fixed;
    width: 162px;
    margin: 0 0 3px 15px;
    border-collapse: separate;
    border-spacing: 0;
    border-left: 1px solid #9a9a9a;
    th, td {
        height: 22px;
        padding: 0 0 2px 5px;
        font-weight: normal;
        text-align: left;
        white-space: nowrap;
        overflow: hidden;
        border-right: 1px solid #9a9a9a;
        border-bottom: 1px solid #9a9a9a;
        line-height: 18px;
    }
    th { width: 80px; padding-left: 4px; background: #f0f0f0; }
    td { background: ${p => p.$locked ? '#f0f0f0' : '#fff'}; }
`
const Sample = styled.span`
    display: flex;
    align-items: center;
    gap: ${p => p.$gap || 3}px;
`

const bare = t => <Sample><svg width="32" height="12"><P d="M0 6.500h32" c="#000" /></svg>{t}</Sample>
const sections = [
    ['General', [
        ['Color', <Sample $gap={1} key="c"><svg width="14" height="14"><Box x={0.5} y={0.5} w={13} h={13} c="#000" /></svg>ByLayer</Sample>],
        ['Layer', 'TEXT'], ['Linetype', bare('ByLayer')], ['Linetype scale', '1.0000'],
        ['Lineweight', bare('ByLayer')], ['Thickness', '0'], ['Transparency', 'ByLayer'],
    ]],
    ['3D Visualization', [['Material', 'ByLayer'], ['Shadow displ...', 'Shadows cas...']]],
    ['Print style', [['Print style', 'ByColor'], ['Print style table', 'None'], ['Print table att...', 'Model'], ['Print table type', 'Color-depend...']]],
    ['View', [['Center X', '96056.3322'], ['Center Y', '13448.9161'], ['Center Z', '0'], ['Width', '9692.5734'], ['Height', '4428.1988']], true],
    ['Visual Style', [
        ['Visual style', '2D Wireframe'], ['Background', 'On'], ['Material mode', 'None'], ['Halo gap', '0'], ['Face opacity', '-60'],
        ['Face style', 'None'], ['Face highlight', '-30'], ['Edges', 'Isolines'], ['Edge jitter', '-2'],
    ]],
]

const Properties = () => (
    <Palette>
        <PaletteTitle><i />Properties</PaletteTitle>
        <PaletteBar>
            <Selection>
                <select aria-label="Selection"><option>No selecti</option></select>
                <svg width="9" height="6"><path d="M0 0l4.500 5L9 0" fill="none" stroke="#555" /></svg>
            </Selection>
            <button aria-label="Categories"><Icon name="tree" /></button>
            <button aria-label="Add to selection"><Icon name="addsel" /></button>
            <button aria-label="Select objects"><Icon name="qsel" /></button>
            <button aria-label="Quick select"><Icon name="filter" /></button>
        </PaletteBar>
        <PaletteBody>
            <ScrollTrack><i /></ScrollTrack>
            <Sections>
                {sections.map(([name, rows, locked]) => (
                    <div key={name}>
                        <SectionHead>{name}</SectionHead>
                        <PropTable $locked={locked}>
                            <tbody>
                                {rows.map(([k, v]) => <tr key={k}><th scope="row">{k}</th><td>{v}</td></tr>)}
                            </tbody>
                        </PropTable>
                    </div>
                ))}
            </Sections>
        </PaletteBody>
    </Palette>
)

/* ---------- drawing ---------- */

const Document = styled.div`
    display: flex;
    flex-direction: column;
    flex: 1;
    min-width: 0;
    margin-right: 1px;
`
const DocTabs = styled.div`
    display: flex;
    align-items: center;
    height: 20px;
    flex: none;
    padding: 0 6px;
    background: linear-gradient(#79828e, #a9adb4);
    & > button:last-child { margin-left: auto; }
`
const DocTab = styled.div`
    display: flex;
    align-items: center;
    gap: 9px;
    height: 19px;
    padding: 0 4px 2px 21px;
    font-weight: 600;
    align-self: flex-end;
    background: #fff;
    clip-path: polygon(14px 0, 100% 0, 100% 100%, 0 100%);
`
const TabIcon = styled.button`
    display: flex;
    align-items: center;
    justify-content: center;
    width: ${p => p.$width || 12}px;
    height: 18px;
`
const Split = styled.div`
    display: flex;
    flex: 1;
    min-height: 0;
`
const Model = styled.div`
    display: flex;
    flex-direction: column;
    flex: 1;
    min-width: 0;
    svg.sheet { flex: 1 1 0; min-height: 0; width: 100%; overflow: hidden; background: #000; }
`
const LayoutTabs = styled.div`
    display: flex;
    height: 19px;
    flex: none;
    font-family: "Liberation Sans", Arial, sans-serif;
    background: #f0f0f0;
    border-top: 1px solid #fff;
    border-bottom: 1px solid #a0a0a0;
`
const NavButton = styled.button`
    display: flex;
    align-items: center;
    justify-content: center;
    width: 16px;
    border-right: 1px solid #a0a0a0;
    border-bottom: 1px solid #a0a0a0;
`
const LayoutTab = styled.button`
    padding: 0 5px;
    font-weight: ${p => p.$active ? 'bold' : 'normal'};
    background: ${p => p.$active ? '#fff' : 'none'};
`
const Slash = ({ back }) => <svg width="8" height="17"><path d={back ? 'M0 0l8 17' : 'M8 0L0 17'} stroke="#000" /></svg>

const YELLOW = '#e6e600'
const LINE = '#7c7c7c'
const LIME = '#00e600'

const Wall = ({ x, y, w, h, empty }) => <rect x={x} y={y} width={w} height={h} fill={empty ? 'none' : 'url(#hatch)'} stroke={YELLOW} />
const Pillar = ({ x, y }) => (
    <g>
        <path d={`M${x} ${y}l25 25M${x + 25} ${y}l-25 25`} stroke={LINE} />
        <rect x={x} y={y} width="25" height="25" fill="none" stroke="#f2f200" strokeWidth="2" />
    </g>
)
const Rects = ({ list, c = LINE }) => list.map(([x, y, w, h], i) => <rect key={i} x={x} y={y} width={w} height={h} fill="none" stroke={c} />)
const Sink = ({ y }) => (
    <g fill="none" stroke={LINE}>
        <rect x="999" y={y} width="85" height="85" rx="10" stroke="#f0f0f0" />
        <rect x="1011" y={y + 6} width="70" height="72" rx="6" />
        <circle cx="1005" cy={y + 42} r="4" strokeWidth="2" />
        <circle cx="1037" cy={y + 42} r="3" strokeWidth="1.500" />
        <path d={`M1005 ${y + 41}h27M1005 ${y + 43}h27`} />
    </g>
)
/* a flight of stairs between two walls, with its direction arrow */
const Stairs = ({ x1, x2, mid, arrow }) => (
    <g fill="none" stroke={LINE}>
        {[216, 220, 233, 250, 267, 284].map(y => <path key={y} d={`M${x1} ${y}.5H${x2}`} />)}
        <path d={`M${mid} 207V301`} />
        <path d={`M${arrow + 75} 287.500H${arrow}M${arrow + 25} 280L${arrow} 287L${arrow + 25} 294`} />
        <path d={`M${x1} 207.500H${x2}M${x1} 301.500H${x2}`} stroke="#e01010" />
        <path d={`M${x1} 326.500H${x2}`} />
    </g>
)

/* the plan font is a single stroke one, so the edge of each glyph is painted away in the ground colour */
const RoomName = styled.text`
    font: 200 50px "DejaVu Sans", "DejaVu Sans Light", sans-serif;
    fill: ${LIME};
    stroke: ${p => p.$ground || '#000'};
    stroke-width: 2px;
    tspan { stroke: none; font-size: 48px; }
`
const Level = styled.text`
    font: 200 48px "DejaVu Sans", "DejaVu Sans Light", sans-serif;
    fill: ${LIME};
`
const AxisName = styled.text`
    font: 300 19px "Open Sans", sans-serif;
    fill: #fff;
`

const vertical = Array.from({ length: 32 }, (_, i) => i)
const horizontal = Array.from({ length: 15 }, (_, i) => i)

const Plan = () => (
    <svg className="sheet" role="img" aria-label="Hospital floor plan">
        <defs>
            <pattern id="hatch" width="12" height="12" patternUnits="userSpaceOnUse">
                <path d="M-1 13L13 -1M-1 1L1 -1M11 13L13 11" stroke="#8a8a8a" strokeWidth="1" />
            </pattern>
        </defs>
        <g transform="translate(-239 -155)" shapeRendering="crispEdges">
            {vertical.map(i => <rect key={i} x={Math.round(245.4 + i * 53.1)} y="155" width="1" height="900" fill={i % 5 === 3 ? '#2c2c2c' : '#161616'} />)}
            {horizontal.map(i => <rect key={i} x="238" y={Math.round(161.3 + i * 53.1)} width="2400" height="1" fill={i % 5 === 0 ? '#2c2c2c' : '#161616'} />)}

            <g fill="none" stroke={LINE}>
                <path d="M501.500 155V907M1300.500 155V907M1401.500 155V907M489.500 356V730M514.500 356V730M489.500 764V907M514.500 764V907" />
                <path d="M514 220.500H1390M1805 220.500H1885M1232 776.500H1885" />
                <path d="M781.500 190.500H1104.500V200.500H781.500z" />
                <path d="M1109.500 224V326.500H1295.500V329.500H1397" />
                <path d="M718.500 738V636.500H973M990 747.500H1092M990 749.500H1092" />
                <path d="M1822.500 326V463L1827 480L1839 492L1856 496.500H1885M1856 496.500L1839 502L1827 514L1822.500 531V740L1827 756L1839 768L1856 772" />
                <path d="M1219.500 907V883.500H1295M1329.500 789V907M1313 806.500H1885" />
                <path d="M1343 790L1313 820M1464 790L1347 907M1584 790L1467 907M1704 790L1587 907M1824 790L1707 907M1885 849L1827 907" />
                <path d="M529.500 384V459M522.500 433L529.500 459L536 433M1118.500 447V372M1111.500 398L1118.500 372L1125 398" />
            </g>

            <Stairs x1={238} x2={489} mid={293.5} arrow={379} />
            <Stairs x1={1415} x2={1805} mid={1609.5} arrow={1694} />
            <Rects list={[
                [347, 306, 134, 5], [347, 306, 13, 10], [238, 311, 122, 5], [360, 308, 107, 2], [239, 313, 108, 2],
                [1423, 316, 134, 5], [1437, 318, 106, 2], [1543, 311, 14, 10], [1557, 311, 120, 5], [1557, 313, 106, 2],
                [1663, 306, 14, 10], [1677, 306, 120, 5], [1677, 308, 106, 2],
                [504, 356, 6, 14], [505, 370, 4, 106], [499, 476, 11, 14], [499, 490, 5, 107], [494, 597, 10, 13],
                [494, 610, 5, 106], [496, 610, 2, 106], [494, 716, 5, 14], [494, 764, 5, 13], [494, 777, 5, 107], [496, 777, 2, 107],
                [494, 884, 10, 14], [499, 898, 5, 40],
            ]} />
            <Rects c={GREEN} list={[[481, 301, 8, 25], [1415, 301, 8, 25], [1797, 301, 8, 25]]} />
            <Rects c="#00b400" list={[[489, 348, 25, 8], [489, 730, 25, 8], [489, 755, 25, 9]]} />

            <Wall x={515} y={208} w={875} h={16} />
            <Wall x={489} y={233} w={25} h={115} />
            <Wall x={1075} y={208} w={17} h={199} />
            <Wall x={1398} y={233} w={17} h={101} />
            <Wall x={1822} y={208} w={80} h={16} />
            <Wall x={1805} y={208} w={17} h={118} empty />
            <Wall x={489} y={738} w={501} h={17} />
            <Wall x={973} y={594} w={17} h={306} />
            <Wall x={973} y={594} w={119} h={17} />
            <Wall x={1075} y={584} w={17} h={27} />
            <Wall x={973} y={883} w={119} h={17} />
            <Wall x={1075} y={883} w={17} h={60} />
            <Wall x={1296} y={704} w={17} h={68} empty />
            <Wall x={1296} y={772} w={620} h={17} />
            <Wall x={1296} y={772} w={17} h={180} />
            <Pillar x={489} y={208} />
            <Pillar x={1389} y={208} />
            <Pillar x={1389} y={764} />

            <path d="M489.500 207V301M990 611.500H1092M990.500 611V883M990 882.500H1092M1805.500 207V301" stroke="#e86a00" />
            <path d="M1414.500 207V301M1092.500 611V883" stroke="#d01010" />
            <Rects c="#d01010" list={[[1093, 312, 5, 177], [1075, 577, 26, 7]]} />
            <Sink y={646} />
            <Sink y={764} />

            <rect x="1146" y="445" width="202" height="66" fill="#057a3b" />

            {/* UCS marker */}
            <g fill="none">
                <path d="M272.500 874V810M265 810.500L272.500 789L279.500 810.500z" stroke={LIME} />
                <path d="M273 874.500H335M335.500 867L357 874.500L335.500 881z" stroke="#e01010" />
                <rect x="265" y="867" width="14" height="14" stroke="#fff" />
            </g>
        </g>
        <g transform="translate(-239 -155)">
            <path d="M258 155h4M272 155h2M286 155h14M331 155h2M372 155h20M402 155h18M447 155h2M1503 155h4M1552 155h3M1604 155h13M1650 155h3M1690 155h20M1720 155h18M1766 155h3" stroke={LIME} strokeWidth="2" />
            <RoomName x="678" y="457">ห้องตรวจ <tspan x="913">1</tspan></RoomName>
            <Level x="714" y="522">+0.10</Level>
            <RoomName x="1530" y="520">ห้องหัตถการ</RoomName>
            <Level x="1570" y="585">+0.10</Level>
            <RoomName x="1146" y="480" $ground="#057a3b">เตรียมยา</RoomName>
            <RoomName x="238" y="714">โถง</RoomName>
            <Level x="216" y="780">+0.10</Level>
            <AxisName x="267" y="776">Y</AxisName>
            <AxisName x="372" y="881">X</AxisName>
            <path d="M1146 445V513M1139 445.500H1153M1139 513.500H1153" stroke="#e8e8e8" strokeWidth="1.500" />
        </g>
    </svg>
)

/* ---------- command line and status ---------- */

const CommandBox = styled.section`
    display: flex;
    flex: none;
    height: 79px;
    margin: 5px 3px 1px 0;
    border-top: 1px solid #a0a0a0;
    background: #fff;
`
const CommandSide = styled.div`
    display: flex;
    flex-direction: column;
    align-items: center;
    gap: 8px;
    width: 21px;
    padding-top: 2px;
    background: #a0a0a0;
    border-right: 1px solid #555;
`
const CommandMain = styled.div`
    display: flex;
    flex-direction: column;
    flex: 1;
`
const History = styled.div`
    display: flex;
    justify-content: space-between;
    height: 58px;
    border-bottom: 1px solid #a0a0a0;
    pre { margin: 0; padding: 1px 0 0 2px; font: 13px/14px "DejaVu Sans Mono", monospace; }
`
const Scroll = styled.div`
    display: flex;
    flex-direction: column;
    align-items: center;
    justify-content: space-between;
    width: 15px;
    padding: 8px 0;
    background: #f0f0f0;
    i { width: 15px; height: 17px; margin-top: 9px; background: #cdcdcd; }
`
const Prompt = styled.label`
    display: flex;
    align-items: center;
    gap: 5px;
    height: 20px;
    padding-left: 2px;
    font: 12px/18px "Liberation Mono", monospace;
    input { flex: 1; outline: 0; }
`
const Status = styled.footer`
    display: flex;
    align-items: center;
    flex: none;
    height: 30px;
    padding: 2px 6px 0 4px;
    color: #fff;
    background: linear-gradient(#484a59, #3c3e48 7px, #2d2d2d 8px, #353535);
`
const Ready = styled.span`
    flex: 1;
`
const Coords = styled.span`
    width: 187px;
    padding-left: 5px;
    border-left: 1px solid #6a6a6a;
    line-height: 28px;
`
const Cell = styled.button`
    display: flex;
    align-items: center;
    justify-content: center;
    gap: 6px;
    width: ${p => p.$width || 30}px;
    height: 28px;
    border-left: 1px solid #4c4c4c;
    color: ${p => p.$dim ? '#8a8a8a' : '#fff'};
`
const Pressed = styled.span`
    display: flex;
    align-items: center;
    justify-content: center;
    width: 22px;
    height: 22px;
    border: 1px solid #fff;
    background: ${p => p.$light ? '#fff' : '#a5a5a8'};
`
const TaskEdge = styled.div`
    display: flex;
    height: 3px;
    flex: none;
    padding-left: 491px;
    background: #20323b;
    i { width: 48px; background: #6a7880; }
`

const statusItems = [
    ['snaptrack', 33, 'light'], ['cross', 26], ['compass', 50, '', '1:1'], ['compassb', 30, 'on'], ['compassl'], ['dots'],
    ['grid', 30, 'on'], ['dyn', 30, 'on'], ['ortho'], ['polar', 30, 'on'], ['osnap', 30, 'on'], ['otrack', 30, 'on'], ['lwt'],
    ['', 43, '', 'MODEL'], ['', 43, 'dim', 'TABLET'], ['gearico'], ['badge'], ['screen'], ['windows'], ['info'], ['mail'],
]

const Footer = () => (
    <>
        <CommandBox>
            <CommandSide>
                <TabIcon aria-label="Close command line"><svg width="8" height="8"><path d="M0 0l8 8M8 0L0 8" stroke="#000" strokeWidth="1.500" /></svg></TabIcon>
                <Caret />
            </CommandSide>
            <CommandMain>
                <History>
                    <pre>{'Opposite corner:\nCommand:\nCancel\nCommand:'}</pre>
                    <Scroll>
                        <svg width="8" height="6"><path d="M0 5l4-4 4 4" fill="none" stroke="#333" strokeWidth="1.500" /></svg>
                        <i />
                        <svg width="8" height="6"><path d="M0 1l4 4 4-4" fill="none" stroke="#333" strokeWidth="1.500" /></svg>
                    </Scroll>
                </History>
                <Prompt>Command:<input defaultValue="_TEXTEDIT" /></Prompt>
            </CommandMain>
        </CommandBox>
        <Status>
            <Ready>Ready</Ready>
            <Coords>97139.8277,13896.4469,0.0000</Coords>
            {statusItems.map(([icon, width, mode, text], i) => (
                <Cell key={i} $width={width} $dim={mode === 'dim'} aria-label={text || icon}>
                    {mode === 'on' || mode === 'light'
                        ? <Pressed $light={mode === 'light'}><Icon name={icon} size={18} /></Pressed>
                        : icon && <Icon name={icon} size={18} />}
                    {text}
                </Cell>
            ))}
        </Status>
        <TaskEdge><i /></TaskEdge>
    </>
)

const NavIcon = ({ d }) => <NavButton aria-label="Layout navigation"><svg width="10" height="10"><path d={d} /></svg></NavButton>

const App = () => (
    <Page>
        <GlobalStyle />
        <Title />
        <Ribbon />
        <Work>
            <SideColumn>
                <Tools list={drawTools} tail />
                <Tools list={viewTools} fill />
            </SideColumn>
            <Document>
                <DocTabs>
                    <DocTab>
                        Hospital_rev2.dwg*
                        <TabIcon aria-label="Close drawing"><svg width="8" height="8"><path d="M0 0l8 8M8 0L0 8" stroke="#000" strokeWidth="1.500" /></svg></TabIcon>
                    </DocTab>
                    <TabIcon $width={24} aria-label="New drawing"><svg width="9" height="9"><path d="M0 4.500h9M4.500 0v9" stroke="#000" strokeWidth="2" /></svg></TabIcon>
                    <TabIcon aria-label="Drawing list"><svg width="10" height="6"><path d="M0 0h10L5 5z" /></svg></TabIcon>
                </DocTabs>
                <Split>
                    <Properties />
                    <Model>
                        <Plan />
                        <LayoutTabs>
                            <NavIcon d="M1 0h2v10H1zM9 0v10L3 5z" />
                            <NavIcon d="M7 0v10L1 5z" />
                            <NavIcon d="M3 0v10l6-5z" />
                            <NavIcon d="M7 0h2v10H7zM1 0v10l6-5z" />
                            <NavIcon d="M4 0h2v4h4v2H6v4H4V6H0V4h4z" />
                            <Slash back />
                            <LayoutTab $active>Model</LayoutTab>
                            <Slash />
                            <LayoutTab>Layout May Day</LayoutTab>
                            <Slash />
                        </LayoutTabs>
                    </Model>
                </Split>
            </Document>
            <SideColumn $right>
                <Tools list={modifyTools} tail />
            </SideColumn>
        </Work>
        <Footer />
    </Page>
)

export default App;
